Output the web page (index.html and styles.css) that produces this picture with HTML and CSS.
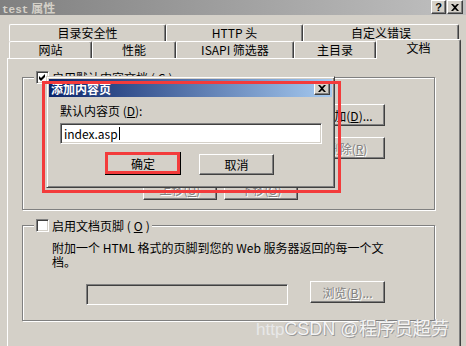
FILE: index.html
```html
<!DOCTYPE html>
<html>
<head>
<meta charset="utf-8">
<title>test 属性</title>
<link rel="stylesheet" href="styles.css">
</head>
<body>

<div class="titlebar">
    <span class="title"><span class="mono">test</span> 属性</span>
    <span class="tbtn help">?</span>
    <span class="tbtn"><svg width="8" height="7" viewBox="0 0 8 7"><path d="M0 0h2l2 2 2-2h2L5 3.5 8 7H6L4 5 2 7H0l3-3.5z" fill="#000"/></svg></span>
</div>

<div class="tabs">
    <div class="tabrow">
        <div class="tab w157">目录安全性</div>
        <div class="tab w137">HTTP 头</div>
        <div class="tab w156">自定义错误</div>
    </div>
    <div class="tabrow">
        <div class="tab w83">网站</div>
        <div class="tab w84">性能</div>
        <div class="tab w118">ISAPI 筛选器</div>
        <div class="tab w82">主目录</div>
        <div class="tab w85 active">文档</div>
    </div>
</div>

<div class="panel">
    <fieldset class="group">
        <legend><span class="check"><svg width="9" height="9" viewBox="0 0 9 9"><path d="M1 3l2 2 4-4v3L3 8 1 6z" fill="#000"/></svg></span>启用默认内容文档 (<u>C</u>)</legend>
        <div class="g1-top">
            <!-- list of documents, hidden under the dialog -->
            <div class="listbox"></div>
            <div class="side">
                <div class="btn">添加(<u>D</u>)...</div>
                <div class="btn off">删除(<u>R</u>)</div>
            </div>
        </div>
        <div class="g1-bottom">
            <div class="btn small off">上移(<u>U</u>)</div>
            <div class="btn small off">下移(<u>O</u>)</div>
        </div>
    </fieldset>

    <fieldset class="group second">
        <legend><span class="check"></span>启用文档页脚 (<u>O</u>)</legend>
        <div class="g2-body">
            <p>附加一个 HTML 格式的页脚到您的 Web 服务器返回的每一个文<br>档。</p>
            <div class="footer-row">
                <div class="field off"></div>
                <div class="btn off">浏览(<u>B</u>)...</div>
            </div>
        </div>
    </fieldset>
</div>

<!-- modal dialog on top of the property sheet -->
<div class="dialog">
    <div class="dlg-title">
        <span>添加内容页</span>
        <span class="tbtn dlg-close"><svg width="8" height="7" viewBox="0 0 8 7"><path d="M0 0h2l2 2 2-2h2L5 3.5 8 7H6L4 5 2 7H0l3-3.5z" fill="#000"/></svg></span>
    </div>
    <div class="dlg-body">
        <div class="label">默认内容页 (<u>D</u>):</div>
        <div class="field input">index.asp<span class="caret"></span></div>
        <div class="dlg-buttons">
            <div class="btn default">确定</div>
            <div class="btn">取消</div>
        </div>
    </div>
</div>

<div class="mark mark-dialog"></div>
<div class="mark mark-ok"></div>

<div class="watermark"><span class="wm-url">http</span>CSDN @程序员超劳</div>

</body>
</html>
```

FILE: styles.css
```css
body {
    margin: 0;
    width: 466px;
    height: 346px;
    overflow: hidden;
    position: relative;
    background: #d4d0c8;
    font-family: "Noto Sans CJK SC", sans-serif;
    font-size: 12px;
    line-height: 13px;
    color: #000;
}

u {
    text-decoration: underline;
}

/* window title */
.titlebar {
    height: 15px;
    display: flex;
    align-items: flex-start;
    padding-right: 3px;
    background: linear-gradient(to right, #808080, #c0c0c0);
}
.title {
    padding-left: 2px;
    line-height: 15px;
    font-weight: bold;
    color: #d4d0c8;
}
.mono {
    font-family: "Liberation Mono", monospace;
    font-size: 11px;
}
.tbtn {
    box-sizing: border-box;
    width: 16px;
    height: 14px;
    display: flex;
    align-items: center;
    justify-content: center;
    background: #d4d0c8;
    border: 1px solid;
    border-color: #fff #404040 #404040 #fff;
    box-shadow: inset -1px -1px #808080;
    font-family: "Liberation Sans", sans-serif;
    font-weight: bold;
    font-size: 11px;
    color: #000;
}
.help {
    margin-left: auto;
    margin-right: 1px;
    width: 15px;
}

/* tabs */
.tabs {
    padding: 9px 0 0 9px;
}
.tabrow {
    display: flex;
    height: 17px;
}
.tab {
    box-sizing: border-box;
    height: 17px;
    border: 1px solid #fff;
    border-bottom: 0;
    border-right-color: #404040;
    border-radius: 2px 2px 0 0;
    box-shadow: inset -1px 0 #808080;
    background: #d4d0c8;
    text-align: center;
    line-height: 15px;
}
.tab.active {
    height: 20px;
    margin-top: -2px;
    margin-bottom: -1px;
    position: relative;
    z-index: 1;
}
.w82 { width: 82px; }
.w83 { width: 83px; }
.w84 { width: 84px; }
.w85 { width: 85px; }
.w118 { width: 118px; }
.w137 { width: 137px; }
.w156 { width: 156px; }
.w157 { width: 157px; }

/* property page */
.panel {
    box-sizing: border-box;
    margin-left: 7px;
    width: 454px;
    height: 300px;
    padding: 12px 0 0 14px;
    border: 1px solid #fff;
    border-bottom: 0;
    border-right-color: #404040;
    box-shadow: inset -1px 0 #808080;
}

.group {
    box-sizing: border-box;
    width: 413px;
    min-width: 0;
    margin: 0;
    padding: 0 0 9px;
    border: 1px solid #808080;
    box-shadow: inset 1px 1px #fff, 1px 1px #fff;
}
.group legend {
    display: flex;
    align-items: center;
    gap: 3px;
    height: 13px;
    margin-left: 11px;
    padding: 0 2px;
    background: #d4d0c8;
}
.group.second {
    margin-top: 9px;
    padding-bottom: 15px;
}

.check {
    box-sizing: border-box;
    width: 13px;
    height: 13px;
    display: flex;
    align-items: center;
    justify-content: center;
    background: #fff;
    border: 1px solid;
    border-color: #808080 #fff #fff #808080;
    box-shadow: inset 1px 1px #404040, inset -1px -1px #d4d0c8;
}

.field {
    box-sizing: border-box;
    background: #fff;
    border: 1px solid;
    border-color: #808080 #fff #fff #808080;
    box-shadow: inset 1px 1px #404040, inset -1px -1px #d4d0c8;
}
.field.off {
    background: #d4d0c8;
}

.btn {
    box-sizing: border-box;
    width: 75px;
    height: 22px;
    display: flex;
    align-items: center;
    justify-content: center;
    background: #d4d0c8;
    border: 1px solid;
    border-color: #fff #404040 #404040 #fff;
    box-shadow: inset -1px -1px #808080;
}
.btn.small {
    width: 74px;
}
.btn.off {
    color: #808080;
    text-shadow: 1px 1px 0 #fff;
}
.btn.default {
    width: 76px;
    height: 23px;
    border-color: #000;
    box-shadow: inset 1px 1px #fff, inset -1px -1px #404040, inset -2px -2px #808080;
}

/* default content group */
.g1-top {
    display: flex;
    padding-top: 20px;
}
.listbox {
    box-sizing: border-box;
    margin-left: 37px;
    width: 238px;
    height: 66px;
    background: #fff;
    border: 1px solid;
    border-color: #808080 #fff #fff #808080;
    box-shadow: inset 1px 1px #404040;
}
.side {
    margin-left: 12px;
    display: flex;
    flex-direction: column;
    gap: 11px;
}
.g1-bottom {
    display: flex;
    gap: 7px;
    margin-top: 8px;
    padding-left: 120px;
}

/* footer group */
.g2-body {
    padding: 9px 0 0 29px;
}
.g2-body p {
    margin: 0;
    line-height: 14px;
}
.footer-row {
    display: flex;
    align-items: flex-start;
    margin-top: 12px;
}
.footer-row .field {
    margin: 3px 0 0 34px;
    width: 202px;
    height: 21px;
}
.footer-row .btn {
    margin-left: 22px;
}

/* dialog */
.dialog {
    position: absolute;
    left: 46px;
    top: 76px;
    width: 289px;
    height: 112px;
    box-sizing: border-box;
    padding: 2px;
    background: #d4d0c8;
    border: 1px solid;
    border-color: #d4d0c8 #404040 #404040 #d4d0c8;
    box-shadow: inset 1px 1px #fff, inset -1px -1px #808080;
    z-index: 2;
}
.dlg-title {
    height: 18px;
    display: flex;
    align-items: center;
    padding: 0 2px;
    background: linear-gradient(to right, #0a246a, #a6caf0);
    color: #fff;
    font-weight: bold;
}
.dlg-close {
    margin-left: auto;
}
.dlg-body {
    padding: 7px 0 0 11px;
}
.input {
    margin-top: 6px;
    width: 262px;
    height: 21px;
    padding-left: 3px;
    display: flex;
    align-items: center;
}
.caret {
    width: 1px;
    height: 13px;
    margin-left: 1px;
    background: #000;
}
.dlg-buttons {
    display: flex;
    align-items: flex-end;
    gap: 18px;
    margin-top: 8px;
    padding-left: 45px;
}
.dlg-buttons .btn {
    height: 21px;
}
.dlg-buttons .btn.default {
    height: 23px;
}

/* red marks drawn over the screenshot */
.mark {
    position: absolute;
    box-sizing: border-box;
    border: 3px solid #f33b3b;
    z-index: 3;
}
.mark-dialog {
    left: 42px;
    top: 81px;
    width: 299px;
    height: 112px;
}
.mark-ok {
    left: 105px;
    top: 152px;
    width: 75px;
    height: 22px;
}

.watermark {
    position: absolute;
    left: 256px;
    top: 318px;
    z-index: 4;
    white-space: nowrap;
    font-family: "Liberation Sans", "Noto Sans CJK SC", sans-serif;
    font-size: 18px;
    line-height: 22px;
    color: #f4f4f4;
    text-shadow: 1px 1px 0 #9a9a9a, -1px 0 0 #b4b4b4;
}
.wm-url {
    color: #e8e8e8;
    text-shadow: none;
    font-size: 17px;
}
```
